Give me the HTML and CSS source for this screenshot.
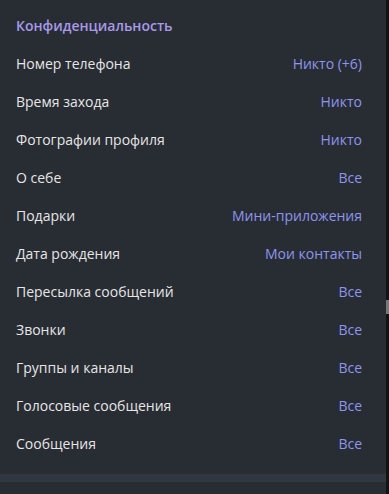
FILE: index.html
```html
<!DOCTYPE html>
<html lang="ru">
<head>
    <meta charset="UTF-8">
    <title>Конфиденциальность</title>
    <link rel="stylesheet" href="styles.css">
</head>
<body>
    <div class="window">
        <div class="panel">
            <div class="section">
                <h2>Конфиденциальность</h2>
                <div class="row"><span>Номер телефона</span><span class="value">Никто (+6)</span></div>
                <div class="row"><span>Время захода</span><span class="value">Никто</span></div>
                <div class="row"><span>Фотографии профиля</span><span class="value">Никто</span></div>
                <div class="row"><span>О себе</span><span class="value">Все</span></div>
                <div class="row"><span>Подарки</span><span class="value">Мини-приложения</span></div>
                <div class="row"><span>Дата рождения</span><span class="value">Мои контакты</span></div>
                <div class="row"><span>Пересылка сообщений</span><span class="value">Все</span></div>
                <div class="row"><span>Звонки</span><span class="value">Все</span></div>
                <div class="row"><span>Группы и каналы</span><span class="value">Все</span></div>
                <div class="row"><span>Голосовые сообщения</span><span class="value">Все</span></div>
                <div class="row"><span>Сообщения</span><span class="value">Все</span></div>
            </div>
            <div class="divider"></div>
        </div>
        <div class="scrollbar"><div class="thumb"></div></div>
    </div>
</body>
</html>
```

FILE: styles.css
```css
html, body {
    margin: 0;
    padding: 0;
    background: #282c33;
}
body {
    font-family: "Open Sans", "Noto Sans", sans-serif;
    font-size: 14px;
    color: #e6e6e6;
}
.window {
    display: flex;
    height: 494px;
    overflow: hidden;
}
.panel {
    width: 386px;
    background: #282c33;
}
.section {
    padding: 6px 24px 12px 16px;
}
.section h2 {
    margin: 0;
    padding-top: 2px;
    height: 36px;
    line-height: 36px;
    font-size: 14px;
    font-weight: 600;
    color: #a79ae9;
}
.row {
    display: flex;
    justify-content: space-between;
    align-items: center;
    height: 38px;
}
.value {
    color: #8e95ee;
}
.divider {
    height: 8px;
    background: #2f3840;
}
.scrollbar {
    width: 3px;
    background: #121314;
    padding-top: 300px;
}
.thumb {
    height: 14px;
    background: #77797c;
}
```
